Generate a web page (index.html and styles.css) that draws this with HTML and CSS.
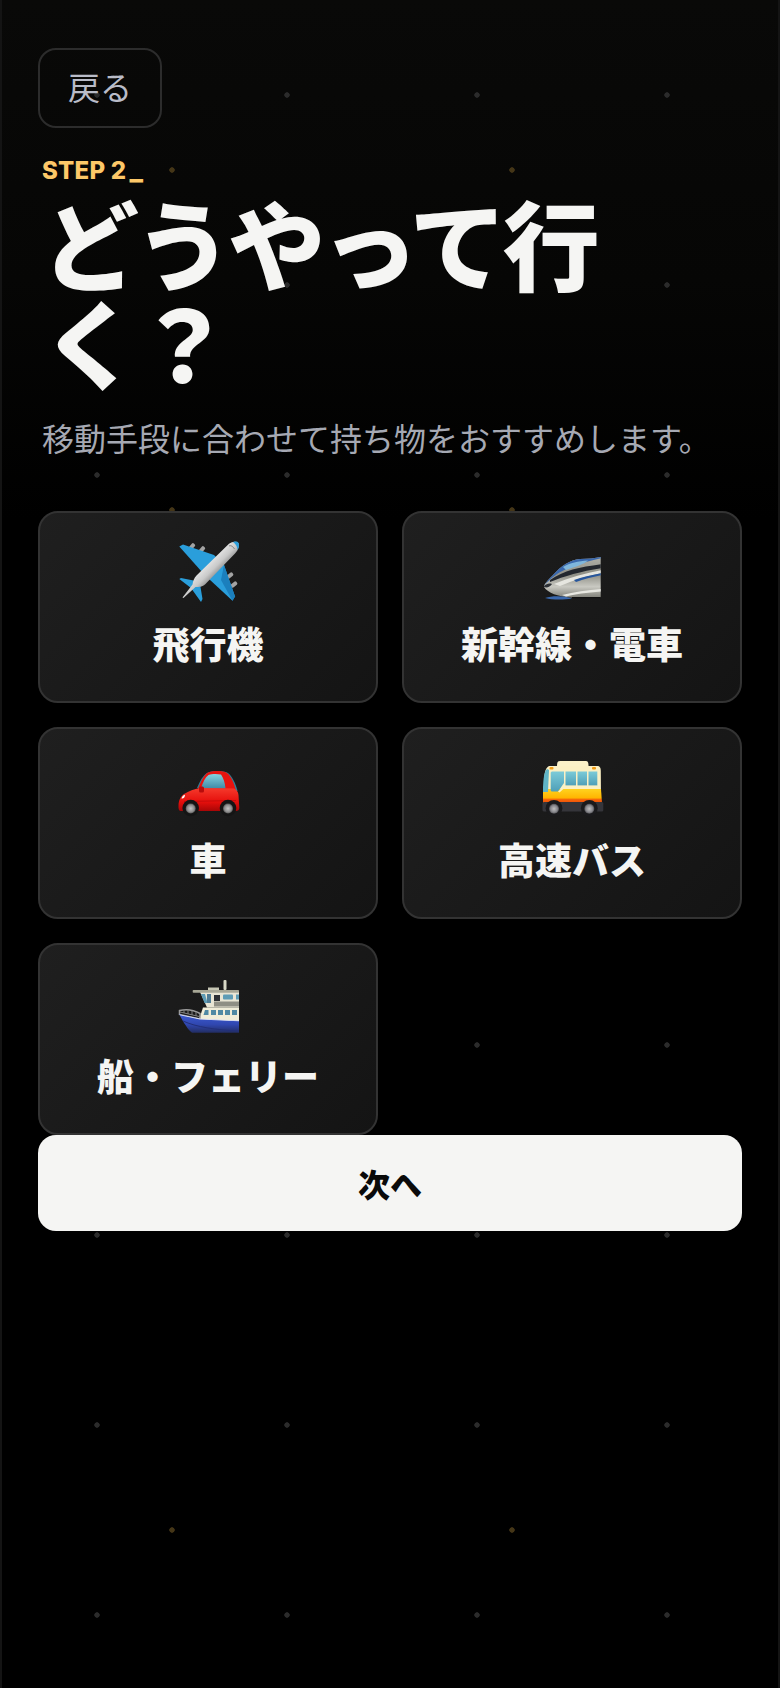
FILE: index.html
```html
<!DOCTYPE html>
<html lang="ja">
<head>
  <meta charset="UTF-8">
  <meta name="viewport" content="width=device-width, initial-scale=1.0">
  <title>どうやって行く？</title>
  <link rel="stylesheet" href="styles.css">
</head>
<body>
  <div class="page">
    <button class="back-button">戻る</button>

    <div class="step-label">STEP 2<span class="step-cursor">_</span></div>
    <h1>どうやって行<br>く？</h1>
    <p class="lead">移動手段に合わせて持ち物をおすすめします。</p>

    <!-- 移動手段 -->
    <div class="choices">
      <button class="choice">
        <svg class="choice-icon" viewBox="0 0 64 64">
          <defs>
            <linearGradient id="plane-body" x1="0.35" y1="0.35" x2="0.65" y2="0.65">
              <stop offset="0" stop-color="#f4f4f4"/>
              <stop offset="0.55" stop-color="#c9c9c9"/>
              <stop offset="1" stop-color="#6f6f6f"/>
            </linearGradient>
          </defs>
          <g fill="#a3a3a3">
            <rect x="14" y="3" width="4" height="7" rx="1.5" transform="rotate(40 16 6.500)"/>
            <rect x="24" y="6" width="4" height="7" rx="1.500" transform="rotate(40 26 9.500)"/>
            <rect x="52" y="32" width="4" height="7" rx="1.500" transform="rotate(50 54 35.500)"/>
            <rect x="56" y="41" width="4" height="7" rx="1.500" transform="rotate(50 58 44.500)"/>
          </g>
          <path d="M3.300 6.500 L7 4.500 L38 15 L48 25 L59 56.500 L56.500 60.800 L33 39 L26 32 Z" fill="#2a9edb"/>
          <path d="M48 25 L59 56.500 L56.500 60.800 L45 40 Z" fill="#1b7fbd"/>
          <path d="M3.300 39 L5 38 L20 41 L24 44 L26.500 59 L25 62 L15 48 Z" fill="#2a9edb"/>
          <path d="M53 3.800 C56 1.600 60 1 62.500 3 C63.600 6 62.500 10 59 13.500 L29.500 44 C26.500 47 23 47 19.500 47 L7.500 58 L6.500 57.500 L16.500 44.500 C17 41 18 38 20.500 35.500 Z" fill="url(#plane-body)"/>
          <path d="M57 2 C60 1.200 61.500 1.500 62.500 3 C63.500 5.500 62.800 8 61.500 10 C61.500 7 60 4 57 2 Z" fill="#2a9edb"/>
          <path d="M53 6 C55 5 57 6.500 58.500 9" fill="none" stroke="#6d6d6d" stroke-width="0.800"/>
        </svg>
        <span class="choice-label">飛行機</span>
      </button>

      <button class="choice">
        <svg class="choice-icon" viewBox="0 0 64 64">
          <defs>
            <linearGradient id="train-body" x1="0" y1="0" x2="0" y2="1">
              <stop offset="0" stop-color="#b4b4ac"/>
              <stop offset="0.45" stop-color="#8f8f86"/>
              <stop offset="0.72" stop-color="#c9c9c2"/>
              <stop offset="1" stop-color="#77776f"/>
            </linearGradient>
            <clipPath id="train-clip">
              <path d="M60.700 17 L60.700 57.500 L30 57.500 C18 56.500 8 53 4 47 C4 44 8 40 12 36 C22 25 30 20 40 19 C48 19 55 18 60.700 17 Z"/>
            </clipPath>
          </defs>
          <g clip-path="url(#train-clip)">
            <rect x="0" y="15" width="62" height="44" fill="url(#train-body)"/>
            <path d="M4 46 C14 34 26 26 62 18 L62 13 L38 17 C26 20 12 32 4 46 Z" fill="#3a68ad"/>
            <path d="M23 27 C30 23 38 21 48 20.500 C44 24 38 26 26 30 Z" fill="#7fb6dc"/>
            <path d="M10 40 C24 30 40 27 62 24 L62 28 C42 31 24 36 10 42 Z" fill="#23272e"/>
            <path d="M14 44 C30 37 46 33 62 30 L62 33 C46 36 34 40 20 46 Z" fill="#e6e6e0"/>
            <path d="M34 40 C42 37 52 35 62 33 L62 35 C52 37 44 39 36 42 Z" fill="#27569c"/>
            <path d="M22 55 C34 52 48 50 62 49 L62 51.500 C48 52.500 34 54.500 26 56.500 Z" fill="#e8e8e2"/>
            <path d="M4 46 C6 44 9 43 12 44 C10 47 7 48 4 47 Z" fill="#2c3036"/>
          </g>
          <path d="M5 58 C12 55.500 24 55.500 32 58.500 C24 60 12 60 5 58 Z" fill="#3a68ad"/>
          <rect x="32" y="57" width="28.700" height="1.200" fill="#111"/>
        </svg>
        <span class="choice-label">新幹線・電車</span>
      </button>

      <button class="choice">
        <svg class="choice-icon" viewBox="0 0 64 64">
          <defs>
            <linearGradient id="car-body" x1="0" y1="0" x2="0" y2="1">
              <stop offset="0" stop-color="#f53a2c"/>
              <stop offset="0.6" stop-color="#e60f0c"/>
              <stop offset="1" stop-color="#a80606"/>
            </linearGradient>
            <linearGradient id="car-glass" x1="0" y1="0" x2="0" y2="1">
              <stop offset="0" stop-color="#85d3df"/>
              <stop offset="1" stop-color="#3f8ba6"/>
            </linearGradient>
            <radialGradient id="car-hub">
              <stop offset="0" stop-color="#c4c4c4"/>
              <stop offset="0.7" stop-color="#8c8c8c"/>
              <stop offset="1" stop-color="#555"/>
            </radialGradient>
          </defs>
          <path d="M21 32 C24 25 27 19 32 16.500 C38 14.500 47 14.500 52 17 C56 20 59.500 27 61.500 35 Z" fill="#2f7f99"/>
          <path d="M22 33 C25 25 28 19 32 16.500 C38 14.500 47 14.500 51 17 C55 20 58 27 60 35 L60 37 L22 37 Z" fill="#e8130f"/>
          <path d="M25 32.500 C27 26 29 21.500 32.500 19 C36 17.700 41 17.700 45 18.500 C47.500 22 49 27 49.500 32.500 Z" fill="url(#car-glass)"/>
          <path d="M2.500 50 C2.500 44 5 40 8 38 C13 35 18 33 24 32 L58 32.500 C60.500 33.500 62.300 36 62.500 39 L63.300 52 C63.300 54 62 55 60 55 L5 55 C3 55 2.300 53 2.500 50 Z" fill="url(#car-body)"/>
          <path d="M5.500 42.500 C6 40.500 7 39.500 9 38.800 C9 41 7.500 43 5.500 42.500 Z" fill="#fff"/>
          <rect x="23" y="30.500" width="5" height="6" rx="1.500" fill="#b80b0b"/>
          <path d="M8 45.500 L60 44.500" stroke="#b60808" stroke-width="0.700"/>
          <g fill="#141414">
            <circle cx="14.700" cy="52" r="8.300"/>
            <circle cx="52" cy="52" r="8.300"/>
          </g>
          <circle cx="14.700" cy="52.500" r="5" fill="url(#car-hub)"/>
          <circle cx="52" cy="52.500" r="5" fill="url(#car-hub)"/>
        </svg>
        <span class="choice-label">車</span>
      </button>

      <button class="choice">
        <svg class="choice-icon" viewBox="0 0 64 64">
          <defs>
            <linearGradient id="bus-yellow" x1="0" y1="0" x2="0" y2="1">
              <stop offset="0" stop-color="#ffd21f"/>
              <stop offset="0.65" stop-color="#ffb400"/>
              <stop offset="0.72" stop-color="#f76a0a"/>
              <stop offset="1" stop-color="#ef4f08"/>
            </linearGradient>
            <linearGradient id="bus-glass" x1="0" y1="0" x2="0" y2="1">
              <stop offset="0" stop-color="#7ccbd8"/>
              <stop offset="1" stop-color="#4f9fb8"/>
            </linearGradient>
            <radialGradient id="bus-hub">
              <stop offset="0" stop-color="#c0c0c0"/>
              <stop offset="0.7" stop-color="#85858a"/>
              <stop offset="1" stop-color="#4c4c50"/>
            </radialGradient>
          </defs>
          <path d="M17 10 C17 6 18 5 20 5 L46 5 C48 5 48.500 7 48.500 10 Z" fill="#fbf1c8"/>
          <path d="M4 30 C4 18 5 12 9 10 L57 10 C60 10 60.800 12 60.800 15 L61 46 L3 46 Z" fill="#fbf0c4"/>
          <path d="M3 33 L61 33 L62 47 L3 47 Z" fill="url(#bus-yellow)"/>
          <path d="M3 31 C3.500 22 4 16 7 13 L9 14 L8 36 L3 36 Z" fill="#5fb4c6"/>
          <path d="M10.700 17 C10.700 16 11.500 15.500 12.500 15.500 L24 15.500 L24 27 L18 35.500 L12.500 35.500 C11.500 35.500 10.700 35 10.700 34 Z" fill="url(#bus-glass)"/>
          <rect x="25.500" y="15.500" width="10.500" height="14" fill="url(#bus-glass)"/>
          <rect x="37.500" y="15.500" width="9.500" height="14" fill="url(#bus-glass)"/>
          <rect x="48.500" y="15.500" width="8.800" height="14" fill="url(#bus-glass)"/>
          <path d="M18 35.500 L24 29.800 L57.500 29.800 L57.500 31.500 L25 31.500 L19.500 36.500 Z" fill="#fbf0c4"/>
          <rect x="9.500" y="11" width="4" height="2.500" rx="1" fill="#f09a13"/>
          <rect x="52" y="11" width="4" height="2.500" rx="1" fill="#f09a13"/>
          <rect x="2.500" y="46" width="60.800" height="9.500" rx="1.500" fill="#35353a"/>
          <circle cx="14" cy="52.300" r="8.400" fill="#1a1a1c"/>
          <circle cx="49.300" cy="52.300" r="8.400" fill="#1a1a1c"/>
          <circle cx="14" cy="52.800" r="5" fill="url(#bus-hub)"/>
          <circle cx="49.300" cy="52.800" r="5" fill="url(#bus-hub)"/>
        </svg>
        <span class="choice-label">高速バス</span>
      </button>

      <button class="choice">
        <svg class="choice-icon" viewBox="0 0 64 64">
          <defs>
            <linearGradient id="ferry-hull" x1="0" y1="0" x2="0" y2="1">
              <stop offset="0" stop-color="#3c5bd2"/>
              <stop offset="0.55" stop-color="#3047b0"/>
              <stop offset="1" stop-color="#222d62"/>
            </linearGradient>
          </defs>
          <rect x="47.500" y="8" width="3" height="10" rx="1" fill="#d8d8c6"/>
          <rect x="32" y="15.500" width="11" height="3" fill="#c6c6b4"/>
          <path d="M24 20 L63 20 L63 35.500 L31 35.500 Z" fill="#e8e5d4"/>
          <rect x="16.700" y="18" width="46.300" height="2.800" rx="0.800" fill="#a7a796"/>
          <path d="M25 22 L29 22 L31.500 31 L28.500 31 Z" fill="#5e9cb5"/>
          <rect x="31" y="22" width="4" height="9" fill="#4f7d96"/>
          <rect x="38" y="23" width="6" height="6" fill="#2c2f33"/>
          <rect x="47" y="22.500" width="10" height="5" rx="1" fill="#5e9cb5"/>
          <rect x="60" y="22.500" width="3" height="5" fill="#5e9cb5"/>
          <rect x="38" y="29.500" width="25" height="5" fill="#8e8e84"/>
          <path d="M27 35.500 L63 35.500 L63 50 L23 47.500 Z" fill="#f0edd9"/>
          <g fill="#4f89a4">
            <path d="M29 38 L32.500 38 L32.500 43 L27.500 43 Z"/>
            <rect x="35" y="38" width="5" height="5"/>
            <rect x="42" y="38" width="5" height="5"/>
            <rect x="49" y="38" width="5" height="5"/>
            <rect x="56" y="38" width="5" height="5"/>
          </g>
          <path d="M3.500 38.500 C10 37 18 38 24 41.500 L24 47 L3.500 42.500 Z" fill="none" stroke="#9a9a9a" stroke-width="1.500"/>
          <path d="M4 40 L23 44.500 M8 38.500 L8 41 M12 38.500 L12 42 M16 39 L16 43 M20 40 L20 44" stroke="#8a8a8a" stroke-width="0.900"/>
          <path d="M3.300 42.300 L24 47 L63 49 L63 60.800 L16 60.800 C12 58 6 48 3.300 42.300 Z" fill="url(#ferry-hull)"/>
          <path d="M3.300 42.300 L24 46.500 L63 48.500 L63 49.300 L24 47.600 L4 43.200 Z" fill="#dfe2f2"/>
          <path d="M7 49 C20 55 40 58 63 59" fill="none" stroke="#222f78" stroke-width="1"/>
        </svg>
        <span class="choice-label">船・フェリー</span>
      </button>
    </div>

    <button class="next-button">次へ</button>
  </div>
</body>
</html>
```

FILE: styles.css
```css
* {
  box-sizing: border-box;
}
body {
  margin: 0;
  background: #000;
  color: #f5f5f3;
  font-family: Inter, 'Noto Sans CJK JP', sans-serif;
}
button {
  font-family: inherit;
}
.page {
  min-height: 1688px;
  padding: 48px 36px 0 36px;
  border-left: 2px solid #141414;
  border-right: 2px solid #141414;
  background-color: #000;
  background-image:
    radial-gradient(circle at center, #2b2b2b 0, #2b2b2b 2.4px, transparent 3px),
    radial-gradient(circle at center, #453617 0, #453617 2.4px, transparent 3px),
    linear-gradient(to bottom, #090908 0, #060605 280px, #000 520px);
  background-size: 190px 190px, 340px 340px, 100% 100%;
  background-repeat: repeat, repeat, no-repeat;
}
.back-button {
  display: block;
  width: 124px;
  height: 80px;
  padding: 0 0 4px 0;
  background: transparent;
  border: 2px solid #2c2c2c;
  border-radius: 18px;
  color: #b9bcc8;
  font-size: 32px;
}
.step-label {
  margin: 28px 0 0 4px;
  color: #fdc868;
  font-size: 24px;
  font-weight: 800;
  line-height: 30px;
  letter-spacing: 0.01em;
}
.step-cursor {
  margin-left: 3px;
  font-size: 28px;
  font-weight: 800;
  line-height: 20px;
}
h1 {
  margin: 12px 0 0 4px;
  font-size: 97px;
  font-weight: 900;
  line-height: 99px;
  letter-spacing: -0.04em;
  color: #f5f5f3;
}
.lead {
  margin: 22px 0 0 4px;
  color: #a6a9b3;
  font-size: 32px;
  line-height: 44px;
}
.choices {
  display: grid;
  grid-template-columns: 1fr 1fr;
  gap: 24px;
  margin-top: 49px;
}
.choice {
  display: flex;
  flex-direction: column;
  align-items: center;
  gap: 18px;
  height: 192px;
  padding: 27px 16px 0 16px;
  background: linear-gradient(135deg, #1f1f1f, #141414);
  border: 2px solid #333;
  border-radius: 20px;
  color: #f5f5f3;
}
.choice-icon {
  width: 64px;
  height: 64px;
  flex-shrink: 0;
}
.choice-label {
  font-size: 37px;
  font-weight: 900;
  line-height: 48px;
}
.next-button {
  display: block;
  width: 100%;
  height: 96px;
  background: #f5f5f3;
  border: none;
  border-radius: 18px;
  color: #0a0a0a;
  font-size: 32px;
  font-weight: 900;
}
```
